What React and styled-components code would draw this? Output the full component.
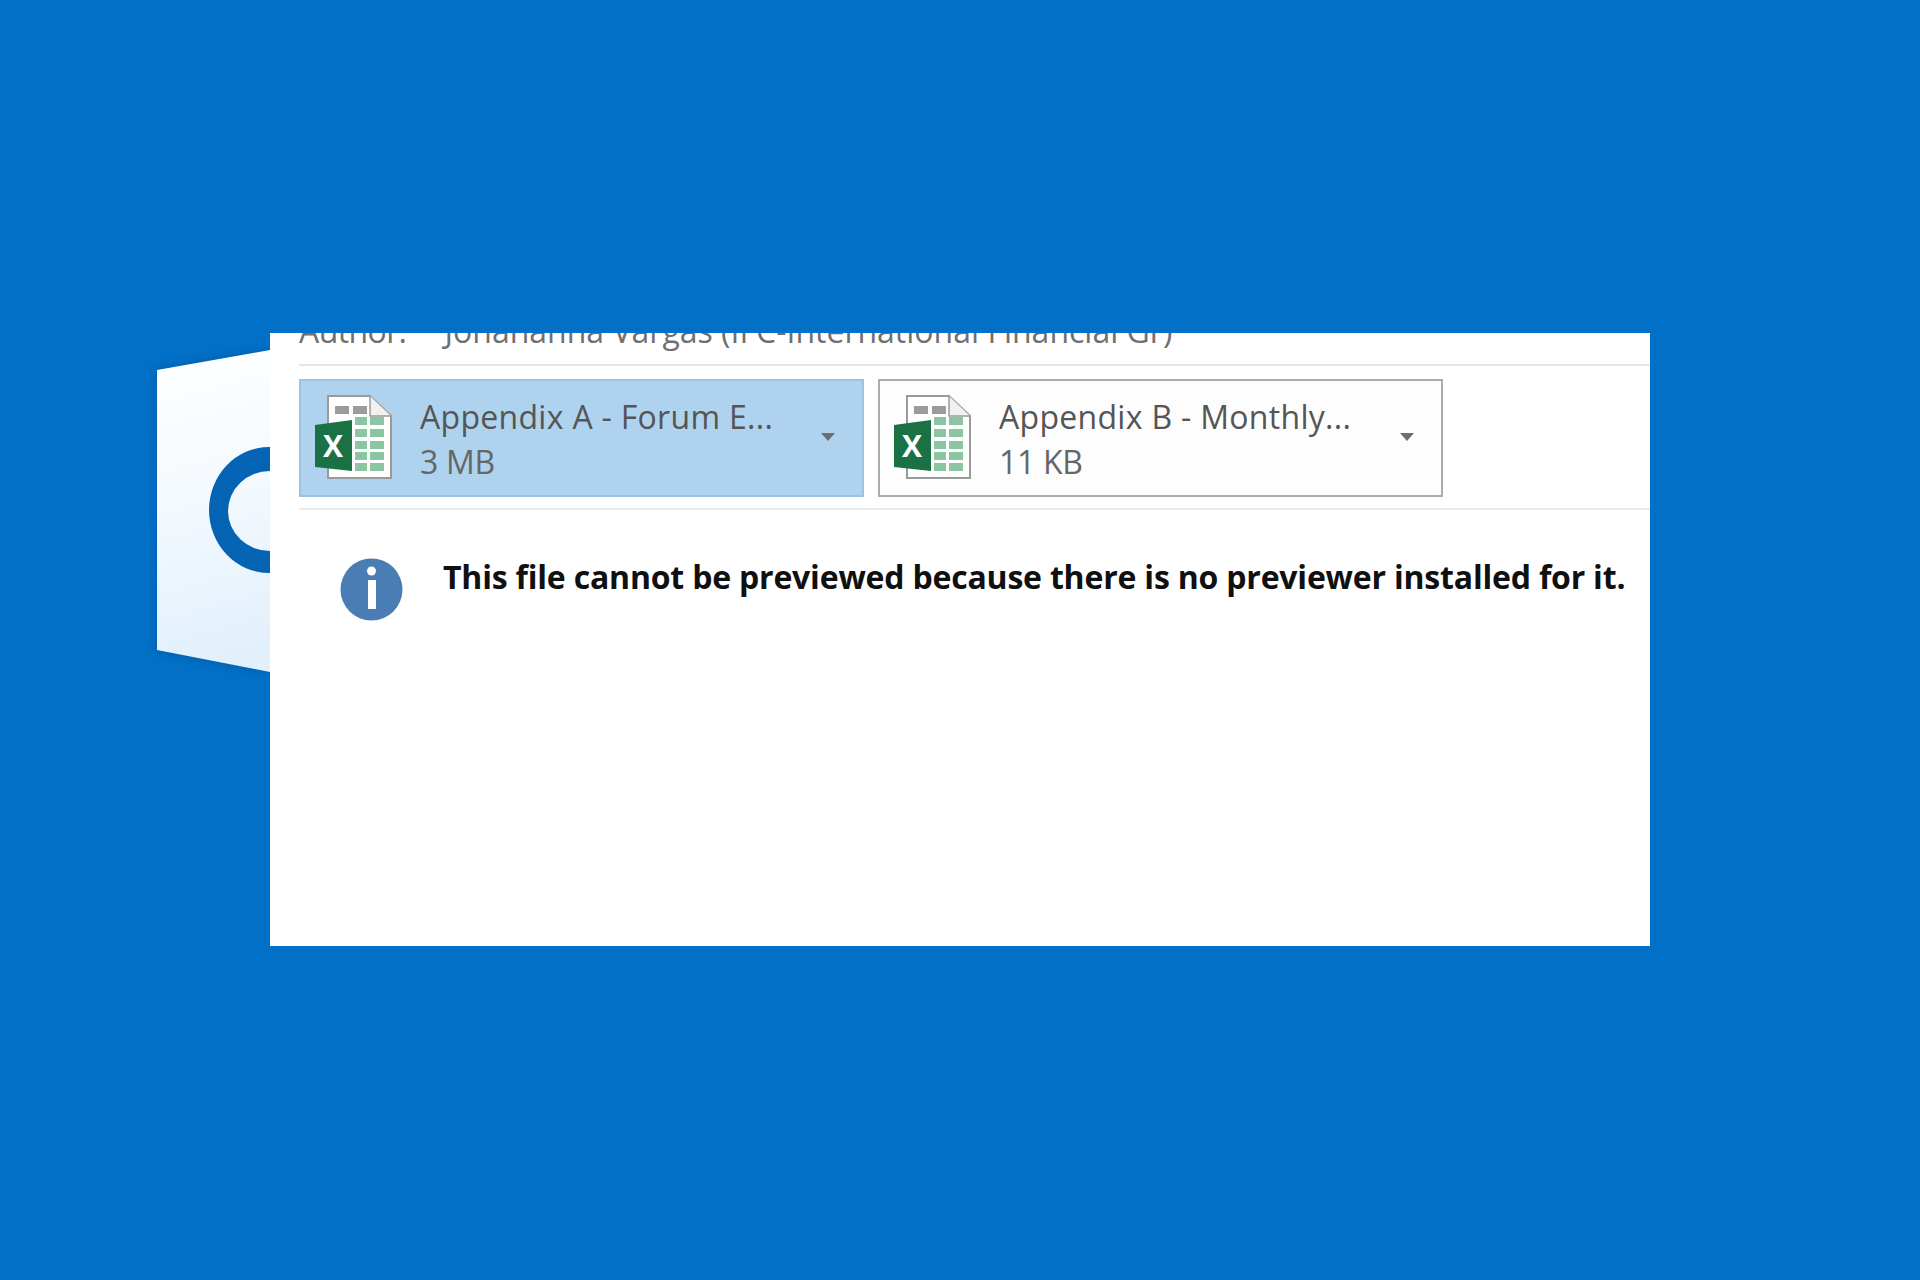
import React from 'react'
import styled, { createGlobalStyle } from 'styled-components'

const GlobalStyle = createGlobalStyle`
  html, body {
    margin: 0;
    padding: 0;
    background: #0170c6;
  }
`

const Stage = styled.div`
  width: 1920px;
  height: 1280px;
  box-sizing: border-box;
  padding: 333px 0 0 157px;
  display: flex;
  align-items: flex-start;
  overflow: hidden;
  background: #0170c6;
  font-family: "Open Sans", "Noto Sans", sans-serif;
`

const Logo = styled.svg`
  flex: none;
  display: block;
  filter: drop-shadow(0 0 5px rgba(0, 70, 140, 0.55));
`

const Panel = styled.main`
  position: relative;
  width: 1380px;
  height: 613px;
  flex: none;
  box-sizing: border-box;
  padding-left: 29px;
  background: #fff;
  overflow: hidden;
`

const AuthorRow = styled.div`
  display: flex;
  gap: 38px;
  margin-top: -24px;
  margin-bottom: 13px;
  padding-bottom: 11px;
  font-size: 32px;
  line-height: 44px;
  color: #707070;
  white-space: nowrap;
  border-bottom: 2px solid #e6e6e6;
`

const AuthorLabel = styled.span`
  letter-spacing: -0.6px;
`

const Attachments = styled.div`
  display: flex;
  gap: 14px;
  padding-bottom: 11px;
  border-bottom: 2px solid #e8e9eb;
`

const Attachment = styled.div`
  width: 565px;
  height: 118px;
  box-sizing: border-box;
  display: flex;
  align-items: center;
  padding: 0 27px 0 14px;
  border: 2px solid ${props => props.$selected ? '#9cc4e2' : '#ababab'};
  background: ${props => props.$selected ? '#afd3ee' : '#fdfdfd'};
`

const FileInfo = styled.div`
  flex: 1;
  margin-left: 27px;
  padding-top: 2px;
  color: #555;
  font-size: 32px;
  letter-spacing: 0.3px;
  white-space: nowrap;
`

const FileName = styled.div`
  line-height: 44px;
`

const FileSize = styled.div`
  line-height: 45px;
  color: #666;
  letter-spacing: -0.3px;
`

const Caret = styled.span`
  width: 0;
  height: 0;
  margin-top: -2px;
  border-left: 7px solid transparent;
  border-right: 7px solid transparent;
  border-top: 8px solid #6e6e6e;
`

const Message = styled.div`
  display: flex;
  align-items: flex-start;
  padding: 48px 0 0 41px;
`

const InfoIcon = styled.svg`
  flex: none;
  display: block;
`

const MessageText = styled.p`
  margin: -3px 0 0 40px;
  font-size: 32px;
  line-height: 44px;
  font-weight: 700;
  color: #101010;
  white-space: nowrap;
  letter-spacing: -0.2px;
`

const OutlookLogo = () => (
  <Logo width="113" height="345" viewBox="0 0 113 345">
    <defs>
      <linearGradient id="face" x1="0" y1="0" x2="0.1" y2="1">
        <stop offset="0" stopColor="#ffffff" />
        <stop offset="0.5" stopColor="#f3f9fe" />
        <stop offset="1" stopColor="#e2f0fc" />
      </linearGradient>
    </defs>
    <polygon points="0,37 113,17 113,339 0,317" fill="url(#face)" />
    <path
      fillRule="evenodd"
      fill="#0563b4"
      d="M52 177 A60 63 0 0 1 172 177 A60 63 0 0 1 52 177 Z M71 178 A42 40 0 0 0 155 178 A42 40 0 0 0 71 178 Z"
    />
  </Logo>
)

const ExcelIcon = () => (
  <svg width="78" height="86" viewBox="0 0 78 86" style={{ flex: 'none' }}>
    <path d="M13 1 H55 L76 21 V83 H13 Z" fill="#fff" stroke="#9a9a9a" strokeWidth="2" />
    <path d="M55 1 V21 H76" fill="#f1f1f1" stroke="#9a9a9a" strokeWidth="1.5" />
    <rect x="20" y="11" width="14" height="8" fill="#9b9b9b" />
    <rect x="38" y="11" width="14" height="8" fill="#9b9b9b" />
    {[22, 34, 46, 57, 68].map(y => (
      <g key={y} fill="#8cc5a2">
        <rect x="40" y={y} width="12" height="8" />
        <rect x="55" y={y} width="14" height="8" />
      </g>
    ))}
    <polygon points="0,30 37,25 37,76 0,72" fill="#1a7143" />
    <text x="18" y="62" textAnchor="middle" fontFamily="'Open Sans', sans-serif" fontWeight="700" fontSize="30" fill="#fff">X</text>
  </svg>
)

const files = [
  { name: 'Appendix A - Forum E...', size: '3 MB', selected: true },
  { name: 'Appendix B - Monthly...', size: '11 KB', selected: false },
]

const App = () => (
  <Stage>
    <GlobalStyle />
    <OutlookLogo />
    <Panel>
      <AuthorRow>
        <AuthorLabel>Author:</AuthorLabel>
        <span>Johanahna Vargas (IFC-International Financial Gr)</span>
      </AuthorRow>
      <Attachments>
        {files.map(file => (
          <Attachment key={file.name} $selected={file.selected}>
            <ExcelIcon />
            <FileInfo>
              <FileName>{file.name}</FileName>
              <FileSize>{file.size}</FileSize>
            </FileInfo>
            <Caret />
          </Attachment>
        ))}
      </Attachments>
      <Message>
        <InfoIcon width="63" height="63" viewBox="0 0 63 63">
          <circle cx="31.5" cy="31.5" r="31" fill="#4b7db5" />
          <circle cx="31.5" cy="13" r="4.5" fill="#fff" />
          <rect x="28" y="22" width="8" height="29" fill="#fff" />
        </InfoIcon>
        <MessageText>This file cannot be previewed because there is no previewer installed for it.</MessageText>
      </Message>
    </Panel>
  </Stage>
)

export default App
